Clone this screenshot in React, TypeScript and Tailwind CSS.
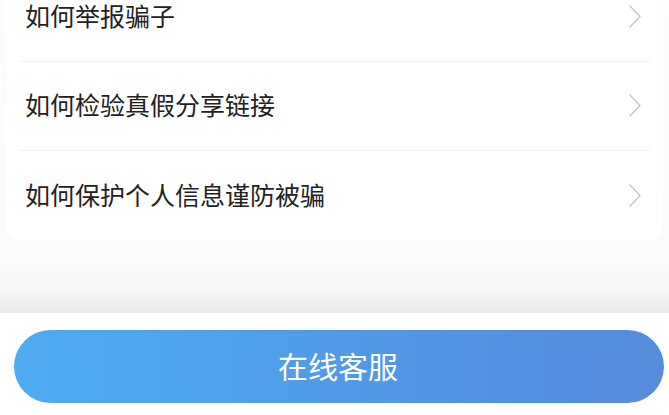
import React from "react";

const items = ["如何举报骗子", "如何检验真假分享链接", "如何保护个人信息谨防被骗"];

function Chevron() {
  return (
    <svg width="12" height="23" viewBox="0 0 12 23" fill="none">
      <polyline points="1,1 11,11.5 1,22" stroke="#c6c6c6" strokeWidth="1.4" strokeLinecap="round" strokeLinejoin="round" />
    </svg>
  );
}

export default function App() {
  return (
    <div
      className="w-[669px] h-[415px] overflow-hidden bg-white flex flex-col"
      style={{ fontFamily: '"Noto Sans CJK SC", "Noto Sans", sans-serif' }}
    >
      {/* List area */}
      <div className="h-[313px] shrink-0 bg-[linear-gradient(to_bottom,#fcfdfe_0px,#fafbfd_265px,#f5f6f8_290px,#eceef0_306px,#e7e9eb_313px)]">
        <div className="-mt-[27px] mx-[6px] bg-white rounded-b-[12px] pl-[14px] pr-[13px]">
          {items.map((t, i) => (
            <div
              key={t}
              className={`h-[89px] flex items-center justify-between ${i < items.length - 1 ? "border-b border-[#f0f0f0]" : ""}`}
            >
              <span className="pl-[5px] -mt-[3px] text-[25px] leading-none text-[#222222]">{t}</span>
              <span className="mr-[9px] -mt-[1px] flex items-center">
                <Chevron />
              </span>
            </div>
          ))}
        </div>
      </div>

      {/* Bottom button */}
      <div className="flex-1 bg-white pt-[17px] pl-[14px] pr-[5px]">
        <button className="w-full h-[73px] rounded-full bg-[linear-gradient(to_right,#4eabf2,#5290e0_80%,#568cdb)] text-white text-[30px] leading-none flex items-center justify-center">
          <span className="-mt-[3px] -ml-[2px]">在线客服</span>
        </button>
      </div>
    </div>
  );
}
